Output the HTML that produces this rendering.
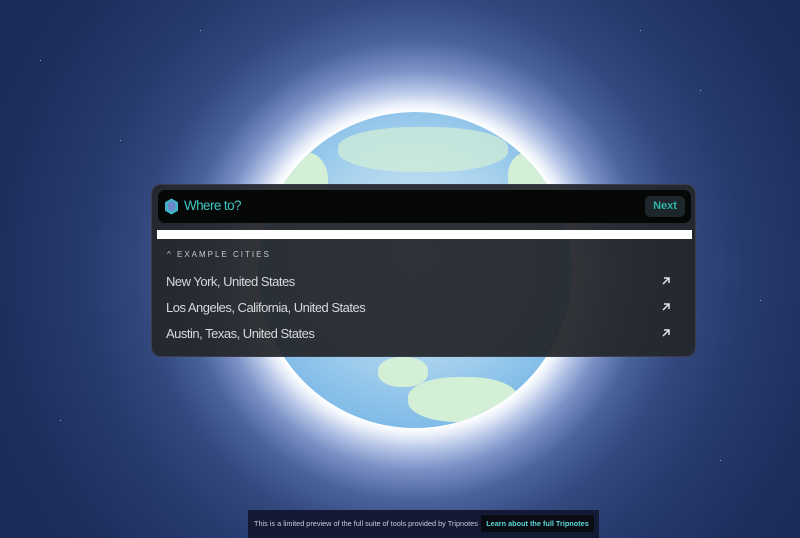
<!DOCTYPE html>
<html><head><style>
*{margin:0;padding:0;box-sizing:border-box}
body{width:800px;height:538px;overflow:hidden;position:relative;font-family:"Liberation Sans",sans-serif;
background:radial-gradient(circle at 415px 270px,#fff 0,#fff 158px,#e8eef9 166px,#b4c4e6 180px,#7b91c6 200px,#4b639c 230px,#33497f 270px,#263a6c 330px,#1d2e5c 420px,#182752 600px)}
.globe{position:absolute;left:258px;top:112px;width:314px;height:316px;border-radius:50%;
background:radial-gradient(circle at 50% 45%,#d8ebf3 0,#a8d2ee 45%,#78b6e6 80%,#62a6e0 100%);overflow:hidden}
.land{position:absolute;background:#d3efd6;border-radius:45%}
.panel{position:absolute;left:151px;top:184px;width:545px;height:173px;border-radius:10px;background:rgba(36,38,44,0.94);border:1px solid #3a3e48}
.bar{position:absolute;left:6px;top:5px;width:533px;height:33px;border-radius:7px;background:#060707}
.bar .t{position:absolute;left:26px;top:8px;color:#3cc6c0;font-size:13.5px;letter-spacing:-0.6px}
.next{position:absolute;right:6px;top:6px;width:40px;height:21px;border-radius:5px;background:#1d2629;color:#2fb3a8;font-size:11px;font-weight:bold;text-align:center;line-height:21px}
.white{position:absolute;left:5px;top:45px;width:535px;height:9px;background:#fff}
.lab{position:absolute;left:15px;top:65px;color:#c6c9d0;font-size:8px;letter-spacing:2px}
.row{position:absolute;left:14px;color:#d6d8dd;font-size:13px;letter-spacing:-0.5px}
.arr{position:absolute;left:509px}
.foot{position:absolute;left:248px;top:510px;width:351px;height:28px;background:#141a34}
.foot .a{position:absolute;left:6px;top:9px;color:#c8ccd8;font-size:7.3px}
.btn{position:absolute;left:233px;top:5px;width:113px;height:17px;background:#0a0c14;border-radius:2px;color:#5fd6d6;font-size:7.3px;font-weight:bold;text-align:center;line-height:17px}
.star{position:absolute;width:1px;height:1px;background:#9ab}
</style></head><body>
<div class="globe">
<div class="land" style="left:80px;top:15px;width:170px;height:45px;opacity:.7"></div>
<div class="land" style="left:20px;top:40px;width:50px;height:60px"></div>
<div class="land" style="left:250px;top:40px;width:45px;height:50px"></div>
<div class="land" style="left:120px;top:245px;width:50px;height:30px"></div>
<div class="land" style="left:150px;top:265px;width:110px;height:45px"></div>
</div>
<div class="star" style="left:40px;top:60px"></div><div class="star" style="left:120px;top:140px"></div><div class="star" style="left:700px;top:90px"></div><div class="star" style="left:760px;top:300px"></div><div class="star" style="left:60px;top:420px"></div><div class="star" style="left:720px;top:460px"></div><div class="star" style="left:200px;top:30px"></div><div class="star" style="left:640px;top:30px"></div>
<div class="panel">
<div class="bar">
<svg style="position:absolute;left:6px;top:8px" width="15" height="17" viewBox="0 0 15 17"><path d="M7.5 0.5L14 4.2V12.8L7.5 16.5L1 12.8V4.2Z" fill="#3fb5c8"/><path d="M7.5 3L11.5 5.5V11L7.5 13.5L4 11V5.5Z" fill="#6f86c7"/></svg>
<div class="t">Where to?</div>
<div class="next">Next</div>
</div>
<div class="white"></div>
<div class="lab">^ EXAMPLE CITIES</div>
<div class="row" style="top:89px">New York, United States</div>
<div class="row" style="top:115px">Los Angeles, California, United States</div>
<div class="row" style="top:141px">Austin, Texas, United States</div>
<svg class="arr" style="top:91px" width="10" height="10" viewBox="0 0 10 10"><path d="M2 8L8 2M3 2H8V7" stroke="#e2e4e8" stroke-width="1.5" fill="none"/></svg>
<svg class="arr" style="top:117px" width="10" height="10" viewBox="0 0 10 10"><path d="M2 8L8 2M3 2H8V7" stroke="#e2e4e8" stroke-width="1.5" fill="none"/></svg>
<svg class="arr" style="top:143px" width="10" height="10" viewBox="0 0 10 10"><path d="M2 8L8 2M3 2H8V7" stroke="#e2e4e8" stroke-width="1.5" fill="none"/></svg>
</div>
<div class="foot"><div class="a">This is a limited preview of the full suite of tools provided by Tripnotes</div><div class="btn">Learn about the full Tripnotes</div></div>
</body></html>
